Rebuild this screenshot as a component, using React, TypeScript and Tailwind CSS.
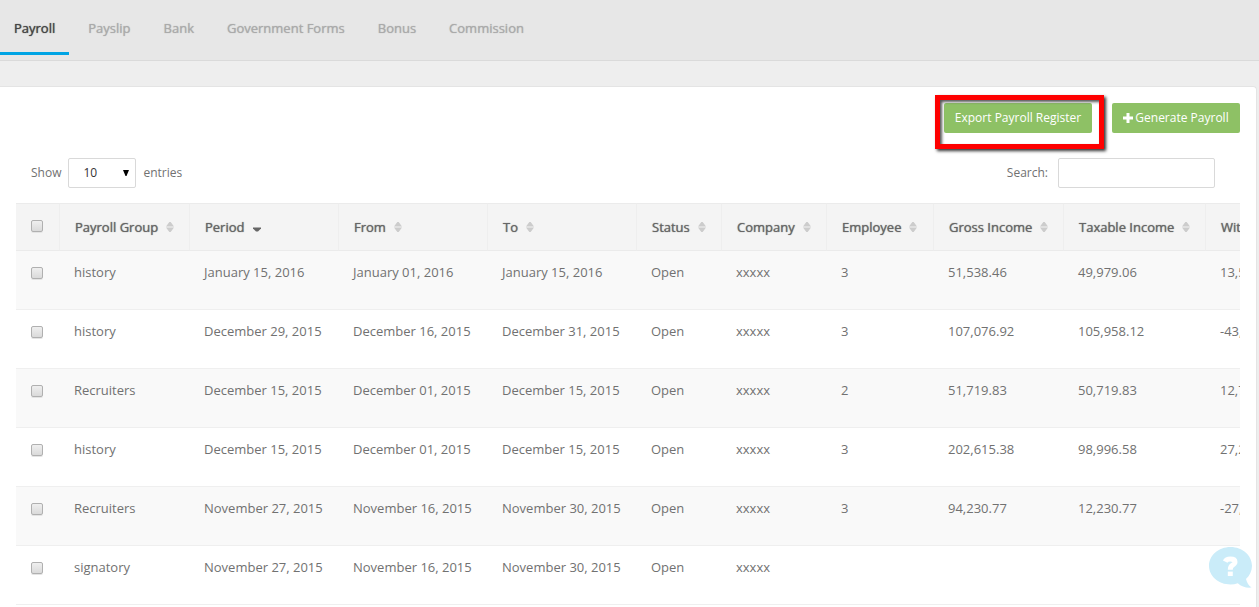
import React, { useState } from 'react';

const tabs = ['Payroll', 'Payslip', 'Bank', 'Government Forms', 'Bonus', 'Commission'];

const columns = [
  'Payroll Group',
  'Period',
  'From',
  'To',
  'Status',
  'Company',
  'Employee',
  'Gross Income',
  'Taxable Income',
  'Withholding Tax',
];

const rows = [
  ['history', 'January 15, 2016', 'January 01, 2016', 'January 15, 2016', 'Open', 'xxxxx', '3', '51,538.46', '49,979.06', '13,559.40'],
  ['history', 'December 29, 2015', 'December 16, 2015', 'December 31, 2015', 'Open', 'xxxxx', '3', '107,076.92', '105,958.12', '-43,118.80'],
  ['Recruiters', 'December 15, 2015', 'December 01, 2015', 'December 15, 2015', 'Open', 'xxxxx', '2', '51,719.83', '50,719.83', '12,719.83'],
  ['history', 'December 15, 2015', 'December 01, 2015', 'December 15, 2015', 'Open', 'xxxxx', '3', '202,615.38', '98,996.58', '27,218.80'],
  ['Recruiters', 'November 27, 2015', 'November 16, 2015', 'November 30, 2015', 'Open', 'xxxxx', '3', '94,230.77', '12,230.77', '-27,230.77'],
  ['signatory', 'November 27, 2015', 'November 16, 2015', 'November 30, 2015', 'Open', 'xxxxx', '', '', '', ''],
];

const SortIcon = ({ sorted }: { sorted: boolean }) => (
  <svg viewBox="0 0 8 10" className="w-2 h-[10px] shrink-0" aria-hidden="true">
    {sorted ? (
      <path d="M0 5.5h8v1L5 9.5H3L0 6.5z" fill="#666" />
    ) : (
      <path d="M0 4.4 3.3 0h1.4L8 4.4zM0 5.6h8L4.7 10H3.3z" fill="#ccc" />
    )}
  </svg>
);

const Checkbox = ({ label, checked, onChange }: { label: string; checked: boolean; onChange: () => void }) => (
  <input
    type="checkbox"
    aria-label={label}
    checked={checked}
    onChange={onChange}
    className="block appearance-none w-3 h-3 rounded-xs border border-[#b0b0b0] bg-gradient-to-b from-[#efefef] to-[#dadada] shadow-[0_1px_0_#e4e4e4] checked:from-[#00a4e4] checked:to-[#00a4e4]"
  />
);

const PayrollTable = () => {
  const [selected, setSelected] = useState<number[]>([]);
  const allSelected = selected.length === rows.length;

  const toggle = (index: number) =>
    setSelected(selected.includes(index) ? selected.filter((i) => i !== index) : [...selected, index]);

  return (
    <div className="overflow-hidden">
      <table className="table-fixed w-[1324px] border-separate border-spacing-0 text-left text-[13px] leading-5 text-[#717171]">
        <colgroup>
          <col className="w-[44px]" />
          <col className="w-[130px]" />
          <col className="w-[149px]" />
          <col className="w-[149px]" />
          <col className="w-[149px]" />
          <col className="w-[85px]" />
          <col className="w-[105px]" />
          <col className="w-[107px]" />
          <col className="w-[130px]" />
          <col className="w-[142px]" />
          <col className="w-[134px]" />
        </colgroup>
        <thead>
          <tr className="h-12 bg-[#f4f4f4]">
            <th className="pl-[15px] pb-[2px] border-y border-r border-[#ebebeb] border-r-[#eeeeee]">
              <Checkbox
                label="Select all"
                checked={allSelected}
                onChange={() => setSelected(allSelected ? [] : rows.map((_, i) => i))}
              />
            </th>
            {columns.map((column) => (
              <th
                key={column}
                className="pl-[15px] border-y border-r border-[#ebebeb] border-r-[#eeeeee] font-normal whitespace-nowrap text-[#666] [text-shadow:0_0_1px_currentColor]"
              >
                <span className="flex items-center gap-2">
                  {column}
                  <SortIcon sorted={column === 'Period'} />
                </span>
              </th>
            ))}
          </tr>
        </thead>
        <tbody>
          {rows.map((row, index) => (
            <tr key={index} className="h-[59px] align-top odd:bg-[#f9f9f9]">
              <td className="pl-[15px] pt-4 border-b border-[#efefef]">
                <Checkbox label={`Select row ${index + 1}`} checked={selected.includes(index)} onChange={() => toggle(index)} />
              </td>
              {row.map((cell, i) => (
                <td key={i} className="pl-[14px] pt-[11px] border-b border-[#efefef] whitespace-nowrap">
                  {cell}
                </td>
              ))}
            </tr>
          ))}
        </tbody>
      </table>
    </div>
  );
};

export default function App() {
  const [activeTab, setActiveTab] = useState('Payroll');

  return (
    <div className="min-h-screen flex flex-col bg-[#eeeeee] font-['Open_Sans',sans-serif] text-xs text-[#717171]">
      {/* Tabs */}
      <nav className="flex gap-[5px] h-[61px] bg-[#e7e7e7] border-b border-[#dadada] text-[13px]">
        {tabs.map((tab) => (
          <a
            key={tab}
            href="#"
            onClick={() => setActiveTab(tab)}
            className={`h-[55px] px-[14px] pt-[6px] flex items-center border-b-3 [text-shadow:0_0_1px_currentColor] ${
              activeTab === tab ? 'border-[#00a4e4] text-[#444]' : 'border-transparent text-[#aaa]'
            }`}
          >
            {tab}
          </a>
        ))}
      </nav>

      {/* Panel */}
      <main className="grow mt-[25px] mr-[2px] px-4 pt-4 bg-white border-t border-r border-[#e4e4e4] rounded-tr-sm">
        <div className="flex justify-end gap-5">
          <div className="relative">
            <button className="block w-[148px] h-[30px] rounded-xs bg-[#8ec165] text-white">Export Payroll Register</button>
            <div className="absolute -left-[9px] -top-2 -right-3 -bottom-4 border-5 border-[#fe0000] shadow-[2px_2px_3px_#333,inset_2px_2px_3px_#555] pointer-events-none" />
          </div>
          <button className="flex items-center justify-center gap-[2px] w-[128px] h-[30px] rounded-xs bg-[#8ec165] text-white">
            <svg viewBox="0 0 10 10" className="w-[10px] h-[10px]" fill="currentColor" aria-hidden="true">
              <path d="M3.5 0h3v3.5H10v3H6.5V10h-3V6.5H0v-3h3.5z" />
            </svg>
            Generate Payroll
          </button>
        </div>

        <div className="flex items-center justify-between mt-[25px] mb-[15px] pl-[15px] pr-[25px]">
          <label className="flex items-center gap-[7px]">
            Show
            <span className="relative">
              <select
                defaultValue="10"
                className="block appearance-none w-[68px] h-[30px] pl-[14px] rounded-xs border border-[#d9d9d9] bg-white text-[#333]"
              >
                <option>10</option>
                <option>25</option>
                <option>50</option>
                <option>100</option>
              </select>
              <svg viewBox="0 0 6 6" className="absolute right-[7px] top-3 w-[6px] h-[6px] pointer-events-none" aria-hidden="true">
                <path d="M0 0h6L3.5 6h-1z" fill="#000" />
              </svg>
            </span>
            entries
          </label>
          <label className="flex items-center gap-[10px]">
            Search:
            <input type="text" className="w-[157px] h-[30px] px-2 rounded-xs border border-[#d9d9d9] bg-white" />
          </label>
        </div>

        <PayrollTable />
      </main>

      {/* Help bubble */}
      <button aria-label="Help" className="fixed right-[7px] bottom-[19px]">
        <svg viewBox="0 0 43 41" className="block w-[43px] h-[41px]" aria-hidden="true">
          <path
            d="M21.5 0C33.4 0 43 8.3 43 18.8c0 5.4-2.300 9.700-6 13.200.8 3.700 2.800 6.500 5.600 8.600-5 .7-10.200-.9-13.800-4.300-2.300.8-4.700 1.200-7.300 1.200C9.600 37.500 0 29.300 0 18.800S9.600 0 21.500 0z"
            fill="#caecf9"
          />
          <path
            d="M16.200 14.600c.8-1.700 2.800-2.500 5.100-2.500 2.800 0 4.700 1 4.700 2.900 0 1.500-.9 2.200-2.500 3.200-1.700 1.100-2.200 2-2.200 4.600"
            fill="none"
            stroke="#fff"
            strokeWidth="5"
          />
          <path d="M18.800 24.600h5V29h-5z" fill="#fff" />
        </svg>
      </button>
    </div>
  );
}
